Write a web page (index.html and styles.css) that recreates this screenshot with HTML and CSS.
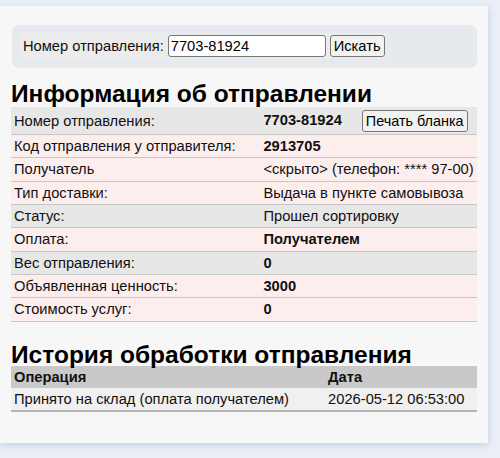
FILE: index.html
```html
<!DOCTYPE html>
<html lang="ru">
<head>
<meta charset="utf-8">
<title>Информация об отправлении</title>
<link rel="stylesheet" href="styles.css">
</head>
<body>
<div class="panel">
  <div class="search">
    <form class="search-form">
      <label class="search-label" for="num">Номер отправления:</label>
      <input class="search-input" id="num" type="text" value="7703-81924">
      <button class="btn" type="button">Искать</button>
    </form>
  </div>

  <h2 class="title">Информация об отправлении</h2>
  <table class="info">
    <colgroup><col class="c1"><col class="c2"></colgroup>
    <tr class="gray first"><td>Номер отправления:</td><td><b>7703-81924</b><button class="btn print" type="button">Печать бланка</button></td></tr>
    <tr class="pink"><td>Код отправления у отправителя:</td><td><b>2913705</b></td></tr>
    <tr class="pink"><td>Получатель</td><td>&lt;скрыто&gt; (телефон: **** 97-00)</td></tr>
    <tr class="pink"><td>Тип доставки:</td><td>Выдача в пункте самовывоза</td></tr>
    <tr class="gray"><td>Статус:</td><td>Прошел сортировку</td></tr>
    <tr class="pink"><td>Оплата:</td><td><b>Получателем</b></td></tr>
    <tr class="gray"><td>Вес отправления:</td><td><b>0</b></td></tr>
    <tr class="pink"><td>Объявленная ценность:</td><td><b>3000</b></td></tr>
    <tr class="pink"><td>Стоимость услуг:</td><td><b>0</b></td></tr>
  </table>

  <h2 class="title title2">История обработки отправления</h2>
  <table class="hist">
    <colgroup><col class="h1"><col class="h2"></colgroup>
    <tr class="hhead"><th>Операция</th><th>Дата</th></tr>
    <tr class="hrow"><td>Принято на склад (оплата получателем)</td><td>2026-05-12 06:53:00</td></tr>
  </table>
</div>
</body>
</html>
```

FILE: styles.css
```css
html, body {
  margin: 0;
  padding: 0;
}
body {
  background: #e9eef7;
  font-family: "Liberation Sans", Arial, sans-serif;
  font-size: 14.7px;
  color: #111;
  width: 500px;
  height: 458px;
  overflow: hidden;
}
.panel {
  margin-top: 6px;
  width: 488px;
  height: 437px;
  background: #f7f7f7;
  box-shadow: 0 2px 6px rgba(120, 150, 190, 0.35);
  padding: 19px 11px 0 11px;
  box-sizing: border-box;
}
.search {
  background: #e6eaee;
  border-radius: 7px;
  padding: 8px 8px 9px;
  margin: 0 0 0 1px;
}
.search-form {
  display: flex;
  align-items: center;
  margin: 0;
  background: #ececec;
  padding: 2px 2px 2px 3px;
  width: max-content;
}
.search-label {
  margin-right: 4px;
}
.search-input {
  width: 158px;
  height: 22px;
  box-sizing: border-box;
  border: 1px solid #777;
  border-radius: 3px;
  padding: 0 2px;
  font: 14.7px "Liberation Sans", Arial, sans-serif;
  color: #000;
  background: #fff;
}
.btn {
  font: 14.7px "Liberation Sans", Arial, sans-serif;
  color: #000;
  background: #f2f2f2;
  border: 1px solid #777;
  border-radius: 3px;
  height: 22px;
  padding: 0 3px;
  margin-left: 4px;
}
.title {
  font-size: 24.5px;
  font-weight: bold;
  margin: 13px 0 0 0;
  line-height: 26px;
  color: #000;
}
.title2 {
  margin-top: 21px;
  line-height: 23px;
}
table {
  border-collapse: collapse;
  table-layout: fixed;
  width: 466px;
}
.c1 { width: 243px; }
.c2 { width: 211px; }
.h1 { width: 306px; }
.h2 { width: 148px; }
td, th {
  padding: 0 3px;
  white-space: nowrap;
  overflow: hidden;
}
.info td {
  height: 22.33px;
  line-height: 22px;
  border-bottom: 1px solid #c6c6c6;
  vertical-align: middle;
}
.info tr.first td {
  height: 27px;
}
.gray td {
  background: #e7e7e7;
}
.pink td {
  background: #fdeeee;
}
.print {
  margin-left: 20px;
  height: 22px;
  padding: 0 3px;
  vertical-align: middle;
  line-height: 18px;
  font-size: 14.4px;
}
.hist th {
  background: #c9c9c9;
  text-align: left;
  height: 22px;
  line-height: 22px;
}
.hist td {
  background: #f0f0f0;
  height: 22.5px;
  line-height: 22px;
  border-bottom: 2px solid #b5b5b5;
}
```
